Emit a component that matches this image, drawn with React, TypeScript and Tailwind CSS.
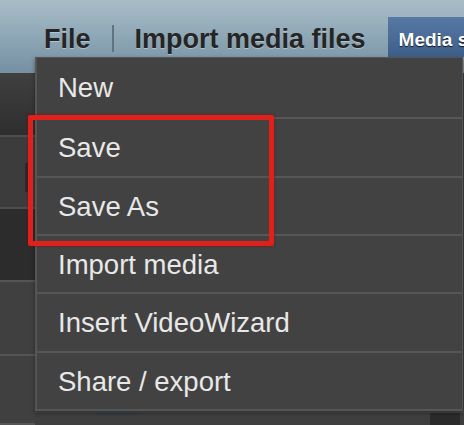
const items = [
  { label: "New", h: "h-[61px]" },
  { label: "Save", h: "h-[59px]" },
  { label: "Save As", h: "h-[58px]" },
  { label: "Import media", h: "h-[58px]" },
  { label: "Insert VideoWizard", h: "h-[59px]" },
  { label: "Share / export", h: "h-[58px]" },
];

export default function App() {
  return (
    <div className="relative w-[464px] h-[425px] overflow-hidden bg-[#3a3a3a] font-['Liberation_Sans',Arial,sans-serif]">
      {/* Top bar */}
      <div className="h-[73px] bg-gradient-to-b from-[#a9bdc8] via-[#8ea7b6] to-[#7590a2]">
        <div className="flex items-start h-[57px] pl-[44px]">
          <span className="pt-[24px] text-[27px] leading-[31px] font-bold text-[#252525] [text-shadow:0_1px_0_rgba(255,255,255,0.35)]">
            File
          </span>
          <div className="w-[2px] h-[27px] mt-[25px] mx-[21px] bg-[#5f7380]" />
          <span className="pt-[24px] text-[27px] leading-[31px] font-bold text-[#252525] whitespace-nowrap [text-shadow:0_1px_0_rgba(255,255,255,0.35)]">
            Import media files
          </span>
          <div className="flex-1 min-w-0 mt-[17px] ml-[22px] h-[40px] overflow-hidden bg-gradient-to-b from-[#567aa4] to-[#3e5e89]">
            <span className="block pl-[11px] pt-[12px] text-[19px] leading-[22px] font-bold text-white whitespace-nowrap [text-shadow:0_1px_1px_rgba(0,0,0,0.8)]">
              Media settings
            </span>
          </div>
        </div>
      </div>

      {/* Underlying content */}
      <div className="flex h-[352px]">
        <div className="w-[35px] flex flex-col">
          <div className="h-[62px] bg-gradient-to-b from-[#404040] to-[#2e2e2e]" />
          <div className="h-[2px] bg-[#4e4e4e]" />
          <div className="h-[70px] bg-[#3c3c3c] relative">
            <div className="absolute left-[25px] top-[26px] w-[8px] h-[29px] bg-[#2a2a2a]" />
          </div>
          <div className="h-[2px] bg-[#4e4e4e]" />
          <div className="h-[71px] bg-[#2c2c2c]" />
          <div className="h-[2px] bg-[#555]" />
          <div className="h-[72px] bg-[#404040]" />
          <div className="h-[2px] bg-[#555]" />
          <div className="flex-1 bg-[#404040] border-b-2 border-[#555]" />
        </div>
        <div className="flex-1 flex flex-col">
          <div className="flex-1 bg-[#3d3d3d]" />
          <div className="h-[14px] flex border-t-2 border-[#4c4c4c] bg-[#3e3e3e]">
            <div className="w-[60px]" />
            <div className="w-[45px] h-[1px] bg-[#2c3c4c]" />
            <div className="flex-1" />
            <div className="w-[30px] bg-[#2b2b2b] mr-[4px]" />
          </div>
        </div>
      </div>

      {/* Dropdown menu */}
      <div className="absolute left-[35px] top-[57px] w-[428px] flex flex-col bg-[#424242] border-l-2 border-t border-r border-[#555] shadow-[0_2px_4px_rgba(0,0,0,0.4)]">
        {items.map((item) => (
          <div
            key={item.label}
            className={`${item.h} flex items-center pl-[21px] border-b-2 border-[#565656] text-[27.5px] leading-[31px] text-[#e8e8e8] whitespace-nowrap`}
          >
            {item.label}
          </div>
        ))}
      </div>

      {/* Highlight box */}
      <div className="absolute left-[28px] top-[115px] w-[246px] h-[131px] border-[5px] border-[#e0211b] rounded-[2px] shadow-[0_0_3px_rgba(120,0,0,0.6)]" />
    </div>
  );
}
